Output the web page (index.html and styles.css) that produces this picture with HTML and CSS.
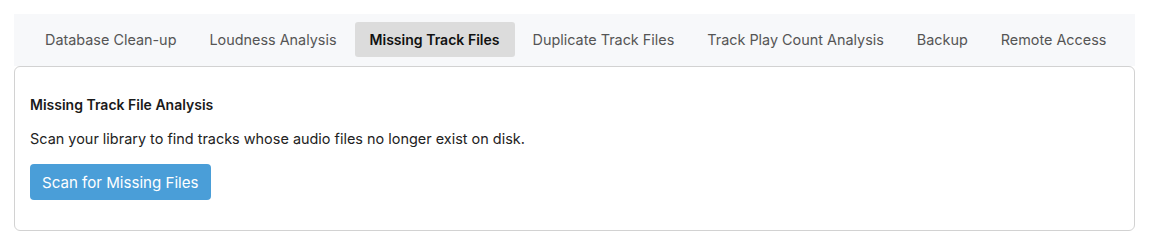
FILE: index.html
```html
<!DOCTYPE html>
<html>
<head>
<meta charset="utf-8">
<link rel="stylesheet" href="styles.css">
</head>
<body>
<div class="wrap">
  <nav class="tabs">
    <div class="tab">Database Clean-up</div>
    <div class="tab">Loudness Analysis</div>
    <div class="tab active">Missing Track Files</div>
    <div class="tab">Duplicate Track Files</div>
    <div class="tab">Track Play Count Analysis</div>
    <div class="tab">Backup</div>
    <div class="tab">Remote Access</div>
  </nav>
  <section class="card">
    <h3 class="title">Missing Track File Analysis</h3>
    <p class="desc">Scan your library to find tracks whose audio files no longer exist on disk.</p>
    <button class="btn">Scan for Missing Files</button>
  </section>
</div>
</body>
</html>
```
FILE: styles.css
```css
html, body { margin: 0; padding: 0; background: #fff; }
body { font-family: Inter, "Noto Sans", sans-serif; color: #222; }
.wrap { padding: 14px 15px 0 14px; }
.tabs {
  display: flex;
  background: #f7f8fa;
  padding: 8px 15px 9px 16px;
  gap: 3px;
}
.tab {
  font-size: 14.4px;
  color: #555;
  padding: 0 15px;
  height: 35px;
  line-height: 35px;
  border-radius: 3px;
  white-space: nowrap;
}
.tab.active {
  background: #dcdcdc;
  color: #111;
  font-size: 14.05px;
  font-weight: 600;
}
.card {
  border: 1px solid #d2d2d2;
  border-radius: 6px;
  padding: 28px 15px 30px 15px;
}
.title {
  margin: 0;
  font-size: 14px;
  font-weight: 600;
  line-height: 20px;
  color: #1a1a1a;
}
.desc {
  margin: 14px 0 15px 0;
  font-size: 14.45px;
  line-height: 20px;
  color: #222;
}
.btn {
  font-family: inherit;
  font-size: 15.1px;
  color: #fff;
  background: #4a9ed8;
  border: none;
  border-radius: 4px;
  height: 36px;
  padding: 0 12px;
}
```
